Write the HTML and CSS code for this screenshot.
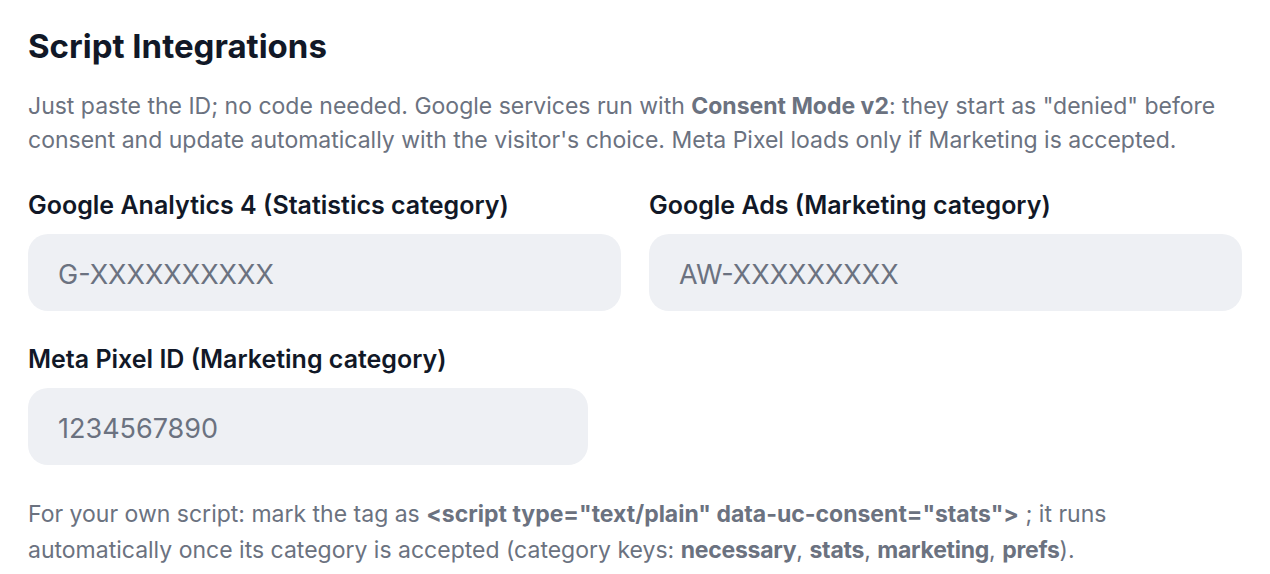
FILE: index.html
```html
<!DOCTYPE html>
<html lang="en">
<head>
<meta charset="utf-8">
<title>Script Integrations</title>
<link rel="stylesheet" href="styles.css">
</head>
<body>
<section class="panel">
  <h2 class="title">Script Integrations</h2>
  <p class="desc">Just paste the ID; no code needed. Google services run with <strong>Consent Mode v2</strong>: they start as "denied" before consent and update automatically with the visitor's choice. Meta Pixel loads only if Marketing is accepted.</p>
  <div class="fields">
    <label class="field">
      <span class="label">Google Analytics 4 (Statistics category)</span>
      <input class="input" type="text" placeholder="G-XXXXXXXXXX">
    </label>
    <label class="field">
      <span class="label">Google Ads (Marketing category)</span>
      <input class="input" type="text" placeholder="AW-XXXXXXXXX">
    </label>
    <label class="field field-narrow">
      <span class="label">Meta Pixel ID (Marketing category)</span>
      <input class="input" type="text" placeholder="1234567890">
    </label>
  </div>
  <p class="note">For your own script: mark the tag as <code class="code">&lt;script type="text/plain" data-uc-consent="stats"&gt;</code> ; it runs automatically once its category is accepted (category keys: <strong>necessary</strong>, <strong>stats</strong>, <strong>marketing</strong>, <strong>prefs</strong>).</p>
</section>
</body>
</html>
```
FILE: styles.css
```css
* { box-sizing: border-box; }
html, body { margin: 0; background: #ffffff; }
body {
  font-family: Inter, "Noto Sans", "Liberation Sans", sans-serif;
  color: #111827;
}
.panel {
  padding: 28px 28px 0 28px;
}
.title {
  margin: 0;
  font-size: 33px;
  line-height: 36px;
  font-weight: 700;
  color: #111827;
}
.desc {
  margin: 25px 0 0 0;
  font-size: 23px;
  line-height: 34px;
  color: #6b7280;
}
.desc strong { font-weight: 700; color: #6b7280; }
.fields {
  margin-top: 33px;
  display: grid;
  grid-template-columns: 1fr 1fr;
  column-gap: 28px;
  row-gap: 33px;
}
.field {
  display: flex;
  flex-direction: column;
  gap: 14px;
}
.field-narrow { max-width: 560px; }
.label {
  font-size: 25px;
  line-height: 30px;
  font-weight: 600;
  color: #111827;
}
.input {
  height: 77px;
  border: none;
  border-radius: 20px;
  background: #eef0f4;
  padding: 3px 30px 0 30px;
  font-family: inherit;
  font-size: 27px;
  color: #111827;
  outline: none;
  width: 100%;
}
.input::placeholder { color: #6b7280; opacity: 1; }
.note {
  margin: 31px 0 0 0;
  font-size: 23px;
  line-height: 36px;
  color: #6b7280;
}
.code {
  font-family: inherit;
  font-weight: 700;
  color: #6b7280;
}
.note strong { font-weight: 700; color: #6b7280; letter-spacing: -0.25px; }
```
